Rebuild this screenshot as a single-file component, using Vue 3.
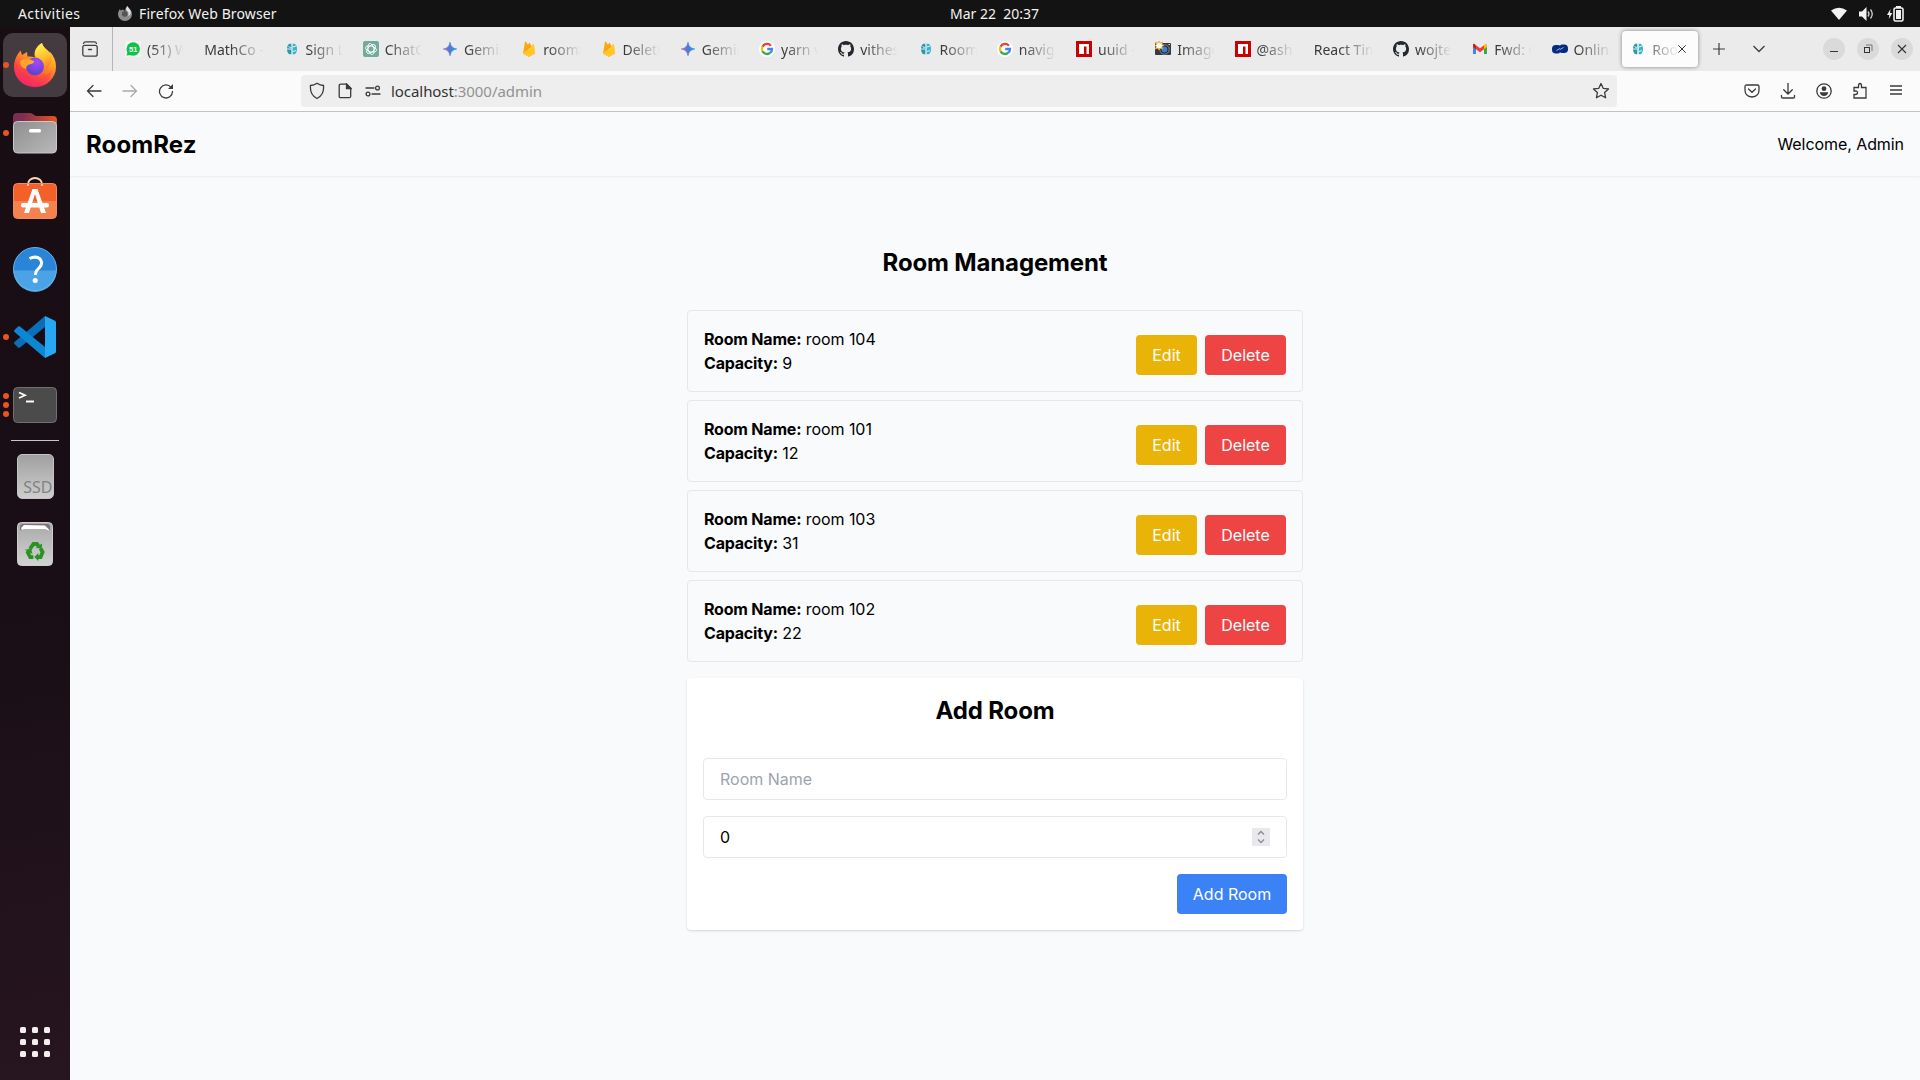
<script setup>
import { ref } from 'vue'

const rooms = ref([
  { id: 1, name: 'room 104', capacity: 9 },
  { id: 2, name: 'room 101', capacity: 12 },
  { id: 3, name: 'room 103', capacity: 31 },
  { id: 4, name: 'room 102', capacity: 22 },
])
const roomName = ref('')
const capacity = ref('0')

const tabs = [
  { icon: 'chat51', title: '(51) Wh' },
  { icon: '', title: 'MathCo - 1' },
  { icon: 'rez', title: 'Sign Lo' },
  { icon: 'gpt', title: 'ChatGP' },
  { icon: 'gemini', title: 'Gemini' },
  { icon: 'fire', title: 'roomre' },
  { icon: 'fire', title: 'Delete' },
  { icon: 'gemini', title: 'Gemini' },
  { icon: 'google', title: 'yarn vit' },
  { icon: 'github', title: 'vithesh' },
  { icon: 'rez', title: 'RoomRe' },
  { icon: 'google', title: 'naviga' },
  { icon: 'npm', title: 'uuid - n' },
  { icon: 'camera', title: 'Image' },
  { icon: 'npm', title: '@asha' },
  { icon: '', title: 'React Time' },
  { icon: 'github', title: 'wojtek' },
  { icon: 'gmail', title: 'Fwd: Co' },
  { icon: 'wave', title: 'Online' },
  { icon: 'rez', title: 'Room', active: true },
]
</script>

<template>
  <div class="desktop">
    <header class="topbar">
      <span class="activities">Activities</span>
      <span class="app">
        <svg width="16" height="16" viewBox="0 0 16 16">
          <path d="M1 8.200C1 5.500 2 4.500 3 3l.8 1.700L5.500 3.600 8.200 5C8 3 9 1.500 10.300 0c.8 1.500 4.700 4 4.700 8.200a7 6.800 0 0 1-14 0z" fill="#8d8d8d" />
          <path d="M10.300 0c-1 2-1.600 3-.6 4.500C12 6 12 8 11 10c3-1 3-3 2.500-5.500C12.500 3 11 1.600 10.300 0z" fill="#e4e4e4" />
          <circle cx="7.700" cy="7.800" r="2.900" fill="#555" />
        </svg>
        <span class="app-name">Firefox Web Browser</span>
      </span>
      <span class="clock">Mar 22&nbsp; 20:37</span>
      <span class="tray">
        <svg width="16" height="14" viewBox="0 0 16 14"><path d="M0 3.500Q8-2 16 3.500L8 13z" fill="#f2f2f2" /></svg>
        <svg width="16" height="14" viewBox="0 0 16 14"><path d="M0 4.500h3L7.500 0v14L3 9.500H0z" fill="#f2f2f2" /><path d="M9 4.500q2 2.500 0 5M11.500 2.500q3.500 4.500 0 9" fill="none" stroke="#d0d0d0" stroke-width="1.300" /></svg>
        <svg width="17" height="16" viewBox="0 0 17 16"><path d="M3.500 3L0 9h2.300L1.800 13l3.500-6H3z" fill="#f2f2f2" /><path d="M9 0h5v2H9z" fill="#f2f2f2" /><rect x="7" y="2" width="9" height="13" rx="1.500" fill="none" stroke="#f2f2f2" stroke-width="1.600" /><rect x="9" y="4" width="5" height="9" fill="#f2f2f2" /></svg>
      </span>
    </header>

    <div class="workspace">
      <nav class="dock">
        <div class="tile focused">
          <span class="dots"><i></i></span>
          <svg width="44" height="46" viewBox="0 0 44 46">
            <defs>
              <linearGradient id="ffBody" x1=".8" y1="0" x2=".3" y2="1"><stop offset="0" stop-color="#ffe14a" /><stop offset=".4" stop-color="#ff9a24" /><stop offset=".7" stop-color="#ff4a3c" /><stop offset="1" stop-color="#e9107c" /></linearGradient>
              <linearGradient id="ffFlame" x1=".4" y1="0" x2=".7" y2="1"><stop offset="0" stop-color="#fff350" /><stop offset=".6" stop-color="#ffb92c" /><stop offset="1" stop-color="#ff7a2a" /></linearGradient>
              <radialGradient id="ffGlobe" cx=".6" cy=".25" r=".8"><stop offset="0" stop-color="#a54bf5" /><stop offset=".6" stop-color="#7544e0" /><stop offset="1" stop-color="#5146c4" /></radialGradient>
            </defs>
            <path d="M1 25C1 18 4 13 7.500 8.500L9 13l5-3 .5 4.500q4-.5 7.500 1C20 9 24 4 29 1c1 4.500 5 6.500 8 10l-.3-1.500C41 14 43 19 43 24.500A21 20.500 0 0 1 1 25z" fill="url(#ffBody)" />
            <path d="M29 1c-5 3-8 8-6.500 13.500 5 2 8 6 8.500 12C38 24 40 19 38 13 35 7 30 6 29 1z" fill="url(#ffFlame)" />
            <circle cx="22" cy="24.500" r="9" fill="url(#ffGlobe)" />
            <path d="M7 19c4-3 9-2.500 14 0 1 2-2 3-5 3.500-2 1-3 2-3 4.500C9 26 7 23 7 19z" fill="#ffa529" />
            <path d="M4 17c0 13 6 20 17 20 8 0 15-4 18-10-1 10-8 17.500-18 17.500C9 44.500 1 36 1 25q0-5 3-8z" fill="#ff3f55" opacity=".4" />
          </svg>
        </div>
        <div class="tile">
          <span class="dots"><i></i></span>
          <svg width="46" height="42" viewBox="0 0 46 42">
            <defs>
              <linearGradient id="fBack"><stop offset=".2" stop-color="#7b2d53" /><stop offset="1" stop-color="#e95420" /></linearGradient>
              <linearGradient id="fFront" x2="1" y2="1"><stop offset="0" stop-color="#8e8e8e" /><stop offset="1" stop-color="#b9b9b9" /></linearGradient>
            </defs>
            <path d="M1 5q0-4 4-4h13q2 0 3.500 1.500T25 4h16q4 0 4 4v10H1z" fill="url(#fBack)" />
            <rect x="1.500" y="9.500" width="43" height="31.500" rx="4" fill="url(#fFront)" stroke="#c9c9c9" />
            <rect x="17" y="17" width="12" height="3.500" rx="1.500" fill="#fff" />
          </svg>
        </div>
        <div class="tile">
          <svg class="store" width="46" height="46" viewBox="0 0 46 46">
            <path d="M16 9.500V8a7 6 0 0 1 14 0v1.500" fill="none" stroke="#f6dcae" stroke-width="1.800" />
            <rect x="1.500" y="7.500" width="43" height="35" rx="4" fill="#f4602a" stroke="#f78a5c" />
            <path d="M2 25h42v14q0 3-3 3H5q-3 0-3-3z" fill="#f5814f" />
            <path d="M16 10V8M30 10V8" stroke="#f6dcae" stroke-width="1.800" />
            <path d="M12 37L20.500 13h5L34 37h-5L23 18l-6 19z" fill="#fff" />
            <rect x="9" y="27" width="28" height="4.500" rx="2" fill="#fff" />
          </svg>
        </div>
        <div class="tile">
          <svg width="46" height="46" viewBox="0 0 46 46">
            <circle cx="23" cy="23" r="21.500" fill="#2a84d8" />
            <path d="M1.500 24.500h43A21.500 21.500 0 0 1 1.500 24.500z" fill="#4ba3e6" />
            <circle cx="23" cy="23" r="21.500" fill="none" stroke="#64b4ec" />
            <path d="M17.500 12.500q6.500-3 10.500.5 3.500 4-.5 8.500c-3 3-4 4-4 7.500" fill="none" stroke="#fff" stroke-width="3" />
            <circle cx="23.200" cy="34.500" r="2.500" fill="#fff" />
          </svg>
        </div>
        <div class="tile">
          <span class="dots"><i></i></span>
          <svg width="42" height="42" viewBox="0 0 42 42">
            <path d="M31 0v11L6 31.500q-1 .7-2 0L.5 28q-.8-1 0-2z" fill="#0a6fb8" />
            <path d="M31 42V31L6 10.500q-1-.7-2 0L.5 14q-.8 1 0 2z" fill="#0c87d4" />
            <path d="M31 0l10 4.700q1 .5 1 1.800v29q0 1.300-1 1.800L31 42z" fill="#28a8f2" />
          </svg>
        </div>
        <div class="tile last-app">
          <span class="dots"><i></i><i></i><i></i></span>
          <svg width="46" height="38" viewBox="0 0 46 38">
            <rect x="1.500" y="1.500" width="43" height="35" rx="4" fill="#4b4b4b" stroke="#707070" />
            <path d="M7 6.500l6 2.700-6 2.800M14 15.500h8" fill="none" stroke="#fff" stroke-width="1.800" />
          </svg>
        </div>
        <div class="separator"></div>
        <div class="tile">
          <div class="drive"><span>SSD</span></div>
        </div>
        <div class="tile">
          <svg width="38" height="46" viewBox="0 0 38 46">
            <defs><linearGradient id="tr" x2="0" y2="1"><stop offset="0" stop-color="#a9a9a9" /><stop offset="1" stop-color="#d2d2d2" /></linearGradient></defs>
            <rect x="1.500" y="1.500" width="35" height="43" rx="4" fill="url(#tr)" stroke="#ccc" />
            <path d="M4 9V6q0-3 3-3h24q3 0 3 3v3l-3 .8-1-3L8 6l-1 3.500z" fill="#777" />
            <path d="M5 7l3-3 21 .5 4 4-.5 1.500-3-2H8l-2 1.500z" fill="#fff" />
            <g transform="translate(2.100 3.200) scale(.9)">
              <g fill="none" stroke="#279322" stroke-width="4.200">
                <path d="M13.200 27.500l3.800-5.500h4l1.800 2.500" /><path d="M25 27l2.200 4-2.200 5.500h-3.500" /><path d="M17 36.500h-3.500l-2.700-5 1-2" />
              </g>
              <path d="M19.500 26l6.500 1.500.8-6zM22.500 32l-4.500 4.500 4.500 4.500zM7.500 28.500l7-1.300 1.500 5.800z" fill="#279322" />
            </g>
          </svg>
        </div>
        <div class="apps"><i v-for="n in 9" :key="n"></i></div>
      </nav>

      <section class="browser">
        <div class="tabstrip">
          <div class="fxview">
            <svg width="16" height="16" viewBox="0 0 16 16" fill="none" stroke="#414141" stroke-width="1.300" stroke-linecap="round"><rect x=".8" y="4.300" width="14.400" height="10.900" rx="2" /><path d="M1.500 2.500q.5-1.700 2-1.700h9q1.500 0 2 1.700M6.500 8.500h3" /></svg>
          </div>
          <div class="tabs">
            <div v-for="(tab, i) in tabs" :key="i" class="tab" :class="{ active: tab.active }">
              <svg v-if="tab.icon" class="favicon" width="16" height="16" viewBox="0 0 16 16">
                <template v-if="tab.icon === 'chat51'">
                  <path d="M1 16L0 15V0h16v16z" fill="#f7f7f7" opacity=".7" />
                  <circle cx="8.200" cy="8" r="6.700" fill="#0ec345" /><path d="M1.500 14.500L3 10l3 4z" fill="#0ec345" />
                  <text x="8.200" y="10.800" font-family="Liberation Sans" font-size="7.500" font-weight="700" fill="#fff" text-anchor="middle">51</text>
                </template>
                <template v-else-if="tab.icon === 'rez'">
                  <path d="M7.300 2.800v10.400H5.500Q3 12 3 8t2.500-5.200z" fill="#2b98ab" /><path d="M8.700 2.800h1.800Q13 4 13 8t-2.500 5.200H8.700z" fill="#39b3cc" />
                  <path d="M3 8h4M9 6l3-1M9 10.500l3-1M4.500 5.500L7 7" stroke="#d8f3f6" />
                </template>
                <template v-else-if="tab.icon === 'gpt'">
                  <rect width="16" height="16" rx="2" fill="#74aa9c" />
                  <g fill="none" stroke="#fff" stroke-width=".9"><ellipse v-for="a in [0, 60, 120]" :key="a" cx="8" cy="8" rx="5.600" ry="2.900" :transform="`rotate(${a + 15} 8 8)`" /></g>
                </template>
                <template v-else-if="tab.icon === 'gemini'">
                  <defs><linearGradient id="gem"><stop offset="0" stop-color="#b06bb5" /><stop offset=".45" stop-color="#5878d0" /><stop offset="1" stop-color="#159be8" /></linearGradient></defs>
                  <path d="M8 1.300Q8.800 7.200 14.700 8 8.800 8.800 8 14.700 7.200 8.800 1.300 8 7.200 7.200 8 1.300z" fill="url(#gem)" stroke="url(#gem)" stroke-width=".7" />
                </template>
                <template v-else-if="tab.icon === 'fire'">
                  <path d="M2 12.500L4 .8q.5-.8 1 0l2 3L8 2q.4-.7.9 0L14 12.500 8.500 15.600q-.6.3-1.200 0z" fill="#ffa712" /><path d="M2 12.500L9.500 4.800 11 6.500z" fill="#f57c0b" /><path d="M2 12.500L12.200 3.200q.6-.4.8.3l1.300 9-5.800 3.100q-.6.300-1.200 0z" fill="#ffca28" />
                </template>
                <template v-else-if="tab.icon === 'google'">
                  <circle cx="8" cy="8" r="8" fill="#fff" />
                  <g fill="none" stroke-width="2.300"><path d="M11.900 4.700A5 5 0 0 0 3.500 5.800" stroke="#ea4335" /><path d="M3.500 5.800a5 5 0 0 0 0 4.400" stroke="#fbbc05" /><path d="M3.500 10.200A5 5 0 0 0 11.300 11.700" stroke="#34a853" /><path d="M11.300 11.700Q13 10.300 13 8H8.200" stroke="#4285f4" /></g>
                </template>
                <path v-else-if="tab.icon === 'github'" fill="#24292f" d="M8 0C3.580 0 0 3.580 0 8c0 3.540 2.290 6.530 5.470 7.590.4.070.55-.17.55-.38 0-.19-.01-.82-.01-1.490-2.010.37-2.530-.49-2.690-.94-.09-.23-.48-.94-.82-1.130-.28-.15-.68-.52-.01-.53.63-.01 1.080.58 1.230.82.720 1.210 1.870.87 2.330.66.070-.52.28-.87.510-1.070-1.780-.2-3.640-.89-3.640-3.950 0-.87.310-1.590.82-2.150-.08-.2-.36-1.020.08-2.120 0 0 .67-.21 2.200.82.640-.18 1.320-.27 2-.27s1.360.09 2 .27c1.530-1.040 2.200-.82 2.200-.82.44 1.100.16 1.920.08 2.120.51.560.82 1.270.82 2.150 0 3.070-1.870 3.750-3.650 3.950.29.25.54.73.54 1.480 0 1.070-.01 1.930-.01 2.200 0 .21.15.46.55.38A8.010 8.010 0 0 0 16 8c0-4.420-3.580-8-8-8z" />
                <template v-else-if="tab.icon === 'npm'">
                  <rect width="16" height="16" fill="#cb0000" /><path d="M3 3h10v10h-2.500V5.500H8V13H3z" fill="#fff" />
                </template>
                <template v-else-if="tab.icon === 'camera'">
                  <rect y="2" width="16" height="12" rx="1" fill="#303b44" /><circle cx="9.500" cy="8.500" r="4.700" fill="#222a33" stroke="#9ba7b0" stroke-width=".8" /><circle cx="9.500" cy="8.500" r="2.900" fill="#3285d5" />
                  <path d="M4 0l1 2.200L7.500 1 6.800 3.500 9 4.500 6.800 5.500 7.500 8 5 7 4 9 3 7 .5 8l.8-2.500L0 4.500l1.500-1L.5 1 3 2.200z" fill="#fff" stroke="#f5a623" stroke-width=".9" /><path d="M13.500 3.500h1.500" stroke="#ddd" />
                </template>
                <template v-else-if="tab.icon === 'gmail'">
                  <path d="M1 4v9h3V7z" fill="#4285f4" /><path d="M12 7v6h3V4z" fill="#34a853" /><path d="M1 4v2l3 2.300V4.500L2.800 3Q1.200 2.200 1 4z" fill="#c5221f" /><path d="M4 4.300l4 3 4-3v4l-4 3-4-3z" fill="#ea4335" /><path d="M12 4.300v4L15 6V4q-.2-1.800-1.800-1z" fill="#fbbc04" />
                </template>
                <template v-else-if="tab.icon === 'wave'">
                  <rect y="4" width="9.500" height="8.500" rx="3.800" fill="#052c83" /><rect x="6.500" y="3.500" width="9.500" height="8.500" rx="3.800" fill="#052c83" />
                  <path d="M4.500 9.500l3.500-2M8 8.500l3.500-2" stroke="#b9c4de" stroke-width=".9" /><path d="M7 3.500h2l-1 1.200zM7 12.500h2l-1-1.200z" fill="#ebebeb" />
                </template>
              </svg>
              <span class="title">{{ tab.title }}</span>
              <svg v-if="tab.active" class="close" width="8" height="8" viewBox="0 0 8 8"><path d="M.3.3l7.400 7.400M7.700.3L.3 7.700" stroke="#333" /></svg>
            </div>
          </div>
          <svg class="plus" width="12" height="12" viewBox="0 0 12 12"><path d="M6 0v12M0 6h12" stroke="#3c3c3c" stroke-width="1.200" /></svg>
          <svg class="chev" width="12" height="8" viewBox="0 0 12 8"><path d="M.5 1L6 6.500 11.500 1" fill="none" stroke="#3c3c3c" stroke-width="1.300" /></svg>
          <div class="controls">
            <span><svg width="10" height="10" viewBox="0 0 10 10"><path d="M1 7.500h8" stroke="#333" /></svg></span>
            <span><svg width="10" height="10" viewBox="0 0 10 10" fill="none"><path d="M3 1h6v6" stroke="#777" /><rect x="1.500" y="3.500" width="5" height="5" stroke="#333" /></svg></span>
            <span><svg width="10" height="10" viewBox="0 0 10 10"><path d="M1 1l8 8M9 1L1 9" stroke="#333" stroke-width="1.100" /></svg></span>
          </div>
        </div>

        <div class="toolbar">
          <div class="btn"><svg width="16" height="16" viewBox="0 0 16 16" class="line"><path d="M15 8H1.500M7 2.500L1.500 8 7 13.500" /></svg></div>
          <div class="btn dim"><svg width="16" height="16" viewBox="0 0 16 16" class="line"><path d="M1 8h13.500M9 2.500L14.500 8 9 13.500" /></svg></div>
          <div class="btn"><svg width="16" height="16" viewBox="0 0 16 16" class="line"><path d="M14.500 8.500A6.500 6.500 0 1 1 13 4.300" /><path d="M15 1v5h-5z" fill="#3b3b3b" stroke="none" /></svg></div>
          <div class="urlbar">
            <svg width="16" height="18" viewBox="0 0 16 18" class="line"><path d="M8 1.300q3.200 2.200 6.500 2.200c.6 6-1.500 10.500-6.500 13C3 14 .9 9.500 1.500 3.500 4.500 3.500 6 2.700 8 1.300z" /></svg>
            <svg width="14" height="16" viewBox="0 0 14 16" class="line"><path d="M1.200 2.700q0-1.500 1.500-1.500h6l4 4v8q0 1.500-1.500 1.500H2.700q-1.500 0-1.500-1.500z" /><path d="M8.500 1v4.500H13z" fill="#3b3b3b" /></svg>
            <svg width="16" height="12" viewBox="0 0 16 12" class="line"><path d="M1 3h8M7 9h8" /><circle cx="12.500" cy="3" r="1.900" /><circle cx="3" cy="9" r="1.900" /></svg>
            <span class="url">localhost<em>:3000/admin</em></span>
            <svg class="star" width="18" height="18" viewBox="0 0 18 18"><path class="line" d="M9 1.500l2.200 4.800 5.300.6-3.900 3.600 1 5.300L9 13.200l-4.600 2.600 1-5.300L1.500 6.900l5.300-.6z" stroke-linejoin="round" /></svg>
          </div>
          <div class="tools">
            <div class="btn"><svg width="16" height="14" viewBox="0 0 16 14" class="line"><path d="M2.500 1h11Q15 1 15 2.500V6q0 6.500-7 7Q1 12.500 1 6V2.500Q1 1 2.500 1z" /><path d="M4.500 5L8 8.300 11.500 5" /></svg></div>
            <div class="btn"><svg width="16" height="16" viewBox="0 0 16 16" class="line"><path d="M8 0v11M3.700 6.700L8 11l4.300-4.300M1.500 12.500v1.200q0 1.300 1.300 1.300h10.400q1.300 0 1.300-1.300v-1.200" /></svg></div>
            <div class="btn"><svg width="16" height="16" viewBox="0 0 16 16" class="line"><circle cx="8" cy="8" r="7.200" /><circle cx="8" cy="5.700" r="2.400" fill="#3b3b3b" stroke="none" /><path d="M3.800 9.200h8.400q-.7 3.800-4.200 3.800T3.800 9.200z" fill="#3b3b3b" stroke="none" /></svg></div>
            <div class="btn"><svg width="16" height="18" viewBox="0 0 16 18" class="line"><path d="M2 7V5.500h4.500V4Q6.500 1.500 8 1.500T9.500 4v1.500H14V16H2v-3.500h1.500Q5.500 12.500 5.500 10.700T3.500 9H2V7" /></svg></div>
            <div class="btn menu"><svg width="12" height="10" viewBox="0 0 12 10" class="line"><path d="M0 1h12M0 5h12M0 9h12" /></svg></div>
          </div>
        </div>

        <main class="page">
          <div class="site-header">
            <h1>RoomRez</h1>
            <span class="welcome">Welcome, Admin</span>
          </div>
          <div class="content">
            <h2>Room Management</h2>
            <ul class="rooms">
              <li v-for="room in rooms" :key="room.id">
                <div>
                  <p><b>Room Name:</b> {{ room.name }}</p>
                  <p><b>Capacity:</b> {{ room.capacity }}</p>
                </div>
                <div class="actions">
                  <button class="edit">Edit</button>
                  <button class="delete">Delete</button>
                </div>
              </li>
            </ul>
            <form class="add" @submit.prevent>
              <h2>Add Room</h2>
              <div class="field"><input v-model="roomName" placeholder="Room Name" /></div>
              <div class="field">
                <input v-model="capacity" />
                <span class="spin"><svg width="8" height="14" viewBox="0 0 8 14" fill="none" stroke="#8f8f9d" stroke-width="1.500"><path d="M1 4.500l3-3 3 3M1 9.500l3 3 3-3" /></svg></span>
              </div>
              <button class="submit">Add Room</button>
            </form>
          </div>
        </main>
      </section>
    </div>
  </div>
</template>

<style>
body { margin: 0; overflow: hidden; }
</style>

<style scoped>
* { box-sizing: border-box; }
svg { display: block; flex: none; }
.desktop { width: 1920px; height: 1080px; display: flex; flex-direction: column; overflow: hidden; font-family: "Noto Sans", sans-serif; }

.topbar { height: 27px; flex: none; background: #131313; color: #f2f2f2; display: grid; grid-template-columns: 117px 1fr auto 1fr; align-items: center; font-size: 14px; line-height: 26px; }
.activities { padding-left: 18px; letter-spacing: .4px; }
.app { display: flex; align-items: center; gap: 6px; }
.app-name { letter-spacing: .12px; }
.clock { position: relative; left: -24px; white-space: pre; }
.tray { justify-self: end; display: flex; align-items: center; gap: 12px; padding-right: 16px; }

.workspace { flex: 1; display: flex; min-height: 0; }
.dock { width: 70px; flex: none; background: linear-gradient(170deg, #190d14 0%, #190e15 55%, #27151f 100%); padding-top: 6px; display: flex; flex-direction: column; align-items: center; }
.tile { width: 64px; height: 64px; flex: none; margin-bottom: 4px; border-radius: 10px; display: flex; align-items: center; justify-content: center; position: relative; }
.tile.focused { background: #443b41; }
.tile.last-app { margin-bottom: 3px; }
.store { margin-top: -5px; }
.dots { position: absolute; left: 0; top: 0; height: 64px; display: flex; flex-direction: column; justify-content: center; gap: 3px; }
.dots i { width: 6px; height: 6px; border-radius: 50%; background: #e95420; }
.separator { width: 48px; height: 1px; flex: none; background: #c8c5c7; margin-bottom: 3px; }
.drive { width: 37px; height: 45px; border-radius: 5px; background: linear-gradient(#a0a0a0, #cecece); border: 1px solid #c4c4c4; display: flex; align-items: flex-end; justify-content: flex-end; color: #828282; font-size: 16px; line-height: 21px; }
.apps { margin-top: auto; margin-bottom: 23px; display: grid; grid-template-columns: repeat(3, 6px); gap: 6px; }
.apps i { height: 6px; border-radius: 1.5px; background: #f2efee; }

.browser { flex: 1; min-width: 0; display: flex; flex-direction: column; }
.tabstrip { height: 44px; flex: none; background: #ebebeb; display: flex; align-items: center; }
.fxview { width: 43px; height: 44px; border-right: 1px solid #b5b5b5; display: flex; align-items: center; padding-left: 12px; }
.tabs { display: flex; padding-left: 2px; height: 100%; }
.tab { width: 79.25px; height: 36px; margin-top: 4px; padding: 0 10px; display: flex; align-items: center; color: #3a3a3a; font-size: 14px; position: relative; }
.favicon { margin-right: 6px; }
.title { flex: 1; min-width: 0; overflow: hidden; white-space: nowrap; line-height: 22px; padding-top: 2px; letter-spacing: 0; mask-image: linear-gradient(to left, transparent 0, #000 34px); }
.tab.active { width: 75.5px; margin-left: 1.5px; padding: 0 12px 0 8px; background: #fcfcfc; border-radius: 4px; box-shadow: 0 0 4px rgba(0, 0, 0, .45); }
.active .title { mask-image: linear-gradient(to left, transparent 0, #000 38px); }
.plus { margin-left: 15px; }
.chev { margin-left: 28px; }
.controls { margin-left: auto; padding-right: 7px; display: flex; gap: 12px; }
.controls span { width: 22px; height: 22px; border-radius: 50%; background: #dadada; display: flex; align-items: center; justify-content: center; }

.toolbar { height: 41px; flex: none; background: #fbfbfb; border-bottom: 1px solid #c3c3c5; display: flex; align-items: center; padding: 0 6px; }
.btn { width: 36px; display: flex; justify-content: center; }
.dim { opacity: .42; }
.menu { padding-bottom: 2px; }
.line { fill: none; stroke: #3b3b3b; stroke-width: 1.3; stroke-linecap: round; }
.urlbar { width: 1316px; height: 32px; margin-left: 117px; border-radius: 4px; background: #eee; display: flex; align-items: center; padding: 0 7px 0 8px; gap: 13px; }
.url { color: #333; font-size: 15px; letter-spacing: -.06px; margin-left: -3px; }
.url em { font-style: normal; color: #929292; }
.star { margin-left: auto; }
.tools { margin-left: auto; display: flex; align-items: center; }

.page { flex: 1; background: #f9fafb; color: #000; font: 16px/24px Inter, sans-serif; display: flex; flex-direction: column; }
.site-header { height: 64px; flex: none; padding: 0 16px; display: flex; align-items: center; justify-content: space-between; box-shadow: 0 1px 2px rgba(0, 0, 0, .06); }
.welcome { letter-spacing: -.07px; }
h1, h2 { margin: 0; font-size: 24px; line-height: 32px; padding-top: 1px; font-weight: 700; }
.content { width: 616px; margin: 70px auto 0; }
h1 { letter-spacing: .1px; }
h2 { text-align: center; margin-bottom: 31px; letter-spacing: -.15px; }
.rooms { list-style: none; margin: 0 0 16px; padding: 0; display: flex; flex-direction: column; gap: 8px; }
.rooms li { height: 82px; padding: 16px; border: 1px solid #e5e7eb; border-radius: 4px; display: flex; justify-content: space-between; align-items: flex-end; }
p { margin: 0; letter-spacing: -.06px; }
b { font-weight: 700; letter-spacing: -.2px; }
.actions { display: flex; gap: 8px; }
button { height: 40px; padding: 0; border: 0; border-radius: 4px; color: #fff; font: inherit; }
.edit { width: 61px; background: #eab308; }
.delete { width: 81px; background: #ef4444; }
.add { background: #fff; border-radius: 4px; padding: 16px; box-shadow: 0 1px 3px rgba(0, 0, 0, .1), 0 1px 2px rgba(0, 0, 0, .06); display: flex; flex-direction: column; }
.field { height: 42px; margin-bottom: 16px; border: 1px solid #e5e7eb; border-radius: 4px; padding: 0 16px; display: flex; align-items: center; }
.field input { flex: 1; min-width: 0; border: 0; padding: 0; outline: 0; background: none; font: inherit; color: #000; }
.field input::placeholder { color: #9ca3af; opacity: 1; }
.spin { width: 18px; height: 18px; background: #e9e9ed; display: flex; align-items: center; justify-content: center; }
.submit { align-self: flex-end; width: 110px; background: #3b82f6; }
</style>
